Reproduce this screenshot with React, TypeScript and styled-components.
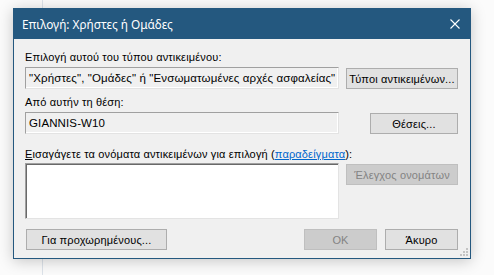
import React from "react";
import styled, { createGlobalStyle } from "styled-components";

const Global = createGlobalStyle`
  html, body { margin: 0; padding: 0; }
  body {
    width: 494px;
    height: 275px;
    overflow: hidden;
    background:
      linear-gradient(to right, transparent 42px, #dde3ea 42px, #dde3ea 43px, transparent 43px),
      #fbfbfb;
    font-family: "Liberation Sans", Arial, sans-serif;
  }
`;

const Page = styled.div`
  padding: 8px 0 0 13px;
`;

const Window = styled.div`
  position: relative;
  width: 458px;
  height: 251px;
  box-sizing: border-box;
  border: 1px solid #24587f;
  background: #f0f0f0;
  box-shadow: 0 2px 14px rgba(0, 0, 0, 0.22);
  display: flex;
  flex-direction: column;
`;

const TitleBar = styled.div`
  height: 30px;
  background: #24587f;
  display: flex;
  align-items: center;
  justify-content: space-between;
  padding: 0 10px 0 8px;
  flex-shrink: 0;
`;

const Title = styled.span`
  color: #ffffff;
  font-family: "Noto Sans", "Open Sans", sans-serif;
  font-size: 11.8px;
`;

const Close = styled.svg`
  width: 10px;
  height: 10px;
`;

const Content = styled.div`
  flex: 1;
  padding: 12px 12px 0 11px;
  display: flex;
  flex-direction: column;
  font-size: 11px;
  letter-spacing: 0.15px;
  color: #000;
`;

const Label = styled.div<{ $mt?: number }>`
  height: 13px;
  line-height: 13px;
  margin-top: ${(p) => p.$mt ?? 0}px;
  white-space: nowrap;
`;

const Row = styled.div<{ $mt: number }>`
  display: grid;
  grid-template-columns: 314px 112px;
  column-gap: 7px;
  margin-top: ${(p) => p.$mt}px;
  align-items: start;
`;

const Field = styled.div<{ $h: number; $white?: boolean }>`
  box-sizing: border-box;
  height: ${(p) => p.$h}px;
  background: ${(p) => (p.$white ? "#ffffff" : "#f0f0f0")};
  border: 1px solid #a0a0a0;
  border-right-color: #e3e3e3;
  border-bottom-color: #e3e3e3;
  box-shadow: ${(p) =>
    p.$white ? "inset 1px 1px 0 #696969" : "inset -1px -1px 0 #ffffff"};
  padding: 0 0 0 3px;
  line-height: 20px;
  font-size: 11.5px;
  letter-spacing: 0.12px;
  white-space: nowrap;
  overflow: hidden;
`;

const Button = styled.div<{ $w?: number; $mt?: number; $ml?: number; $disabled?: boolean }>`
  box-sizing: border-box;
  width: ${(p) => (p.$w ? `${p.$w}px` : "100%")};
  height: 21px;
  margin-top: ${(p) => p.$mt ?? 0}px;
  margin-left: ${(p) => p.$ml ?? 0}px;
  justify-self: end;
  background: ${(p) => (p.$disabled ? "#cccccc" : "#e1e1e1")};
  border: 1px solid ${(p) => (p.$disabled ? "#bfbfbf" : "#adadad")};
  color: ${(p) => (p.$disabled ? "#838383" : "#000000")};
  display: flex;
  align-items: center;
  justify-content: center;
  white-space: nowrap;
`;

const Link = styled.span`
  color: #0066cc;
  text-decoration: underline;
`;

const Footer = styled.div`
  display: flex;
  align-items: center;
  margin-top: 10px;
  padding-left: 1px;
`;

const Spacer = styled.div`
  flex: 1;
`;

const Grip = styled.svg`
  position: absolute;
  right: 2px;
  bottom: 2px;
  width: 8px;
  height: 8px;
`;

export default function App() {
  return (
    <>
      <Global />
      <Page>
        <Window>
          <TitleBar>
            <Title>Επιλογή: Χρήστες ή Ομάδες</Title>
            <Close viewBox="0 0 10 10">
              <path d="M0.5 0.5 L9.5 9.5 M9.5 0.5 L0.5 9.5" stroke="#ffffff" strokeWidth="1.1" fill="none" />
            </Close>
          </TitleBar>
          <Content>
            <Label>Επιλογή αυτού του τύπου αντικειμένου:</Label>
            <Row $mt={3}>
              <Field $h={22}>"Χρήστες", "Ομάδες" ή "Ενσωματωμένες αρχές ασφαλείας"</Field>
              <Button $mt={1}>Τύποι αντικειμένων...</Button>
            </Row>
            <Label $mt={7}>Από αυτήν τη θέση:</Label>
            <Row $mt={3}>
              <Field $h={22}>GIANNIS-W10</Field>
              <Button $w={88} $mt={1}>Θέσεις...</Button>
            </Row>
            <Label $mt={14}>
              <u>Ε</u>ισαγάγετε τα ονόματα αντικειμένων για επιλογή (<Link>παραδείγματα</Link>):
            </Label>
            <Row $mt={2}>
              <Field $h={56} $white />
              <Button $mt={1} $disabled>Έλεγχος ονομάτων</Button>
            </Row>
            <Footer>
              <Button $w={141}>Για προχωρημένους...</Button>
              <Spacer />
              <Button $w={73} $disabled>OK</Button>
              <Button $w={73} $ml={8}>Άκυρο</Button>
            </Footer>
          </Content>
          <Grip viewBox="0 0 8 8">
            <rect x="6" y="0" width="2" height="2" fill="#c4c4c4" />
            <rect x="3" y="3" width="2" height="2" fill="#c4c4c4" />
            <rect x="6" y="3" width="2" height="2" fill="#c4c4c4" />
            <rect x="0" y="6" width="2" height="2" fill="#c4c4c4" />
            <rect x="3" y="6" width="2" height="2" fill="#c4c4c4" />
            <rect x="6" y="6" width="2" height="2" fill="#c4c4c4" />
          </Grip>
        </Window>
      </Page>
    </>
  );
}
